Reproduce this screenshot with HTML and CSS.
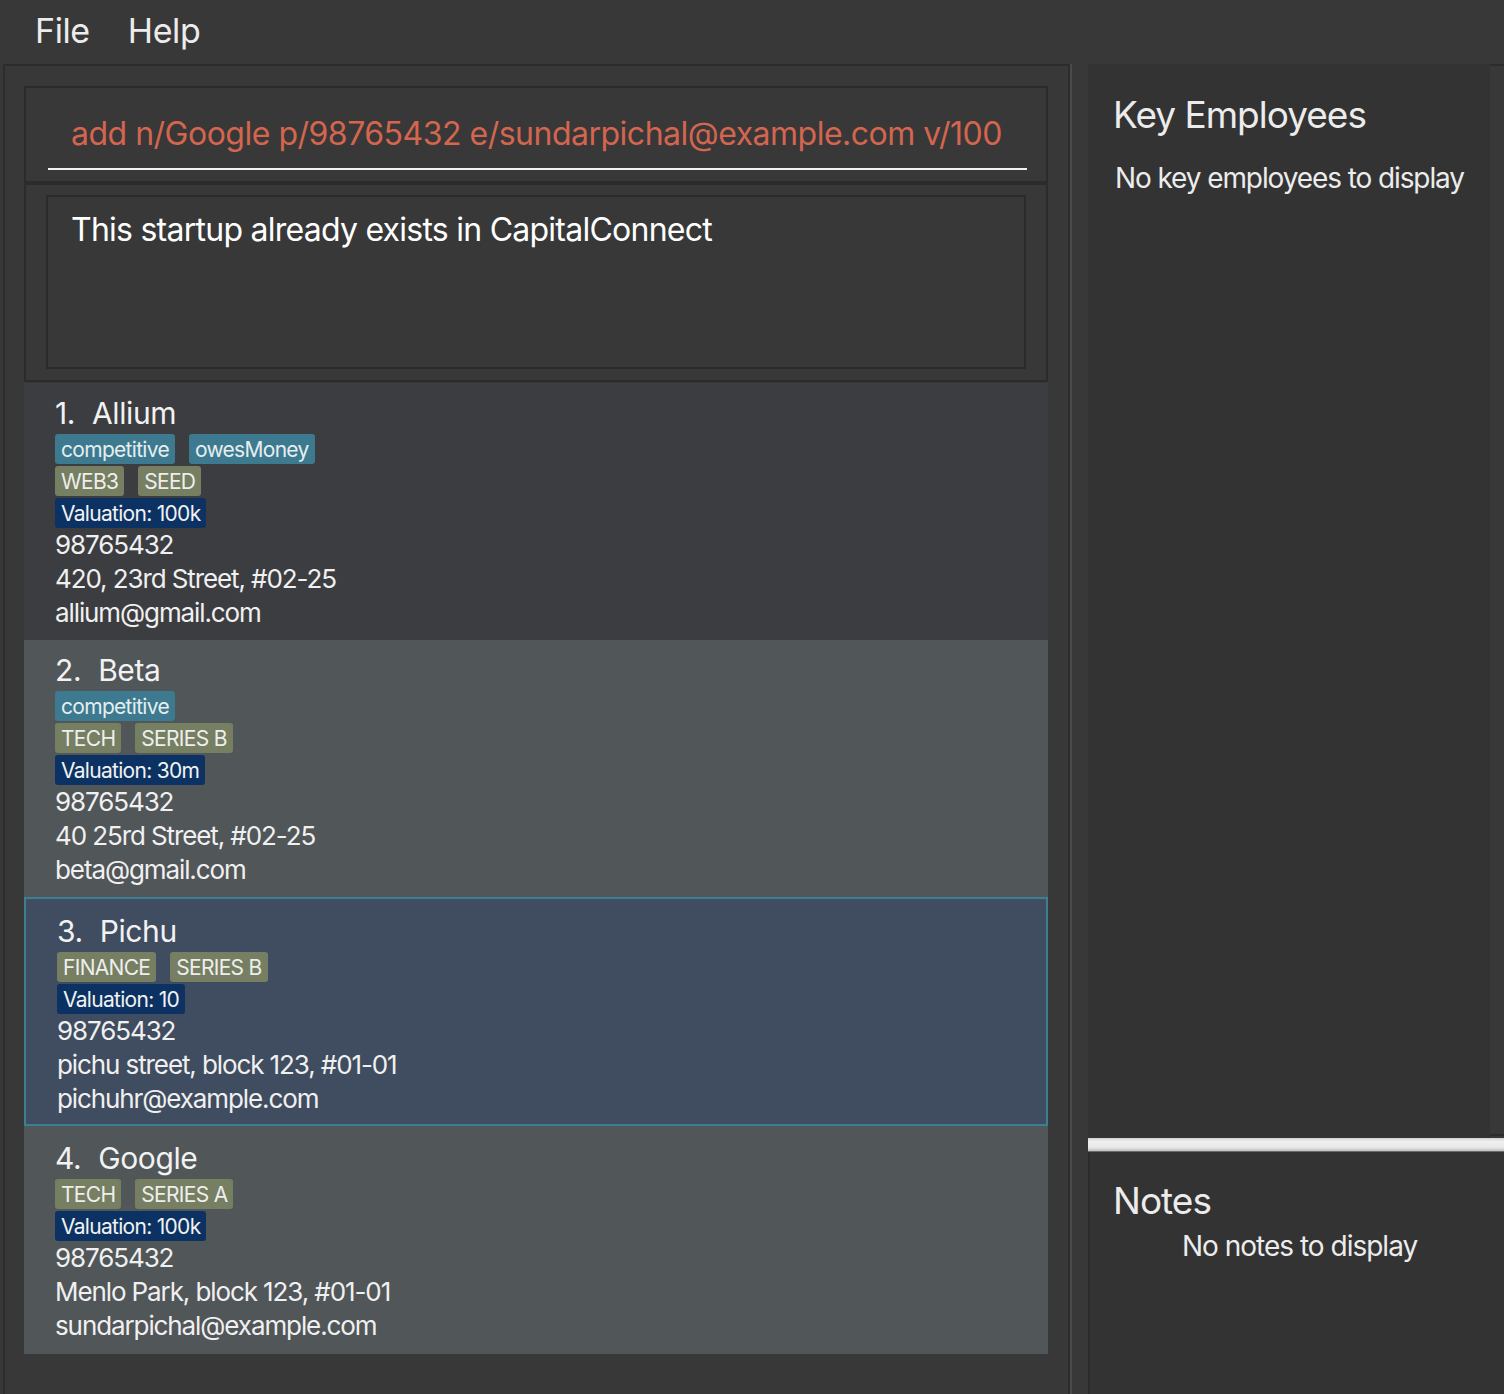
FILE: index.html
```html
<!DOCTYPE html>
<html>
<head>
<meta charset="utf-8">
<link rel="stylesheet" href="styles.css">
</head>
<body>
<div class="app">
  <div class="menubar">
    <span class="menu-item">File</span>
    <span class="menu-item">Help</span>
  </div>
  <div class="main">
    <div class="left-pane">
      <div class="command-box">
        <div class="command-text">add n/Google p/98765432 e/sundarpichal@example.com v/100</div>
        <div class="command-underline"></div>
      </div>
      <div class="result-box">
        <div class="result-inner">This startup already exists in CapitalConnect</div>
      </div>
      <div class="list">
        <div class="card odd">
          <div class="name"><span class="idx">1.</span>Allium</div>
          <div class="tag-row"><span class="tag teal">competitive</span><span class="tag teal">owesMoney</span></div>
          <div class="tag-row"><span class="tag olive">WEB3</span><span class="tag olive">SEED</span></div>
          <div class="tag-row"><span class="tag navy">Valuation: 100k</span></div>
          <div class="line">98765432</div>
          <div class="line">420, 23rd Street, #02-25</div>
          <div class="line">allium@gmail.com</div>
        </div>
        <div class="card even">
          <div class="name"><span class="idx">2.</span>Beta</div>
          <div class="tag-row"><span class="tag teal">competitive</span></div>
          <div class="tag-row"><span class="tag olive">TECH</span><span class="tag olive">SERIES B</span></div>
          <div class="tag-row"><span class="tag navy">Valuation: 30m</span></div>
          <div class="line">98765432</div>
          <div class="line">40 25rd Street, #02-25</div>
          <div class="line">beta@gmail.com</div>
        </div>
        <div class="card selected">
          <div class="name"><span class="idx">3.</span>Pichu</div>
          <div class="tag-row"><span class="tag olive">FINANCE</span><span class="tag olive">SERIES B</span></div>
          <div class="tag-row"><span class="tag navy">Valuation: 10</span></div>
          <div class="line">98765432</div>
          <div class="line">pichu street, block 123, #01-01</div>
          <div class="line">pichuhr@example.com</div>
        </div>
        <div class="card even last">
          <div class="name"><span class="idx">4.</span>Google</div>
          <div class="tag-row"><span class="tag olive">TECH</span><span class="tag olive">SERIES A</span></div>
          <div class="tag-row"><span class="tag navy">Valuation: 100k</span></div>
          <div class="line">98765432</div>
          <div class="line">Menlo Park, block 123, #01-01</div>
          <div class="line">sundarpichal@example.com</div>
        </div>
      </div>
    </div>
    <div class="v-divider"></div>
    <div class="right-col">
      <div class="right-top">
        <div class="panel employees">
          <div class="panel-title">Key Employees</div>
          <div class="panel-empty">No key employees to display</div>
        </div>
        <div class="strip"></div>
      </div>
      <div class="h-divider"></div>
      <div class="panel notes">
        <div class="panel-title">Notes</div>
        <div class="panel-empty centered">No notes to display</div>
      </div>
    </div>
  </div>
</div>
</body>
</html>
```

FILE: styles.css
```css
html, body {
  margin: 0;
  padding: 0;
  background: #383838;
}
body {
  font-family: "Inter", "Liberation Sans", sans-serif;
  color: #f0f0f0;
}
.app {
  width: 1504px;
  height: 1394px;
  display: flex;
  flex-direction: column;
  overflow: hidden;
  background: #383838;
}
.menubar {
  height: 64px;
  display: flex;
  align-items: center;
  padding-left: 35px;
  padding-bottom: 4px;
  gap: 38px;
  box-sizing: border-box;
}
.menu-item {
  font-size: 34px;
  color: #ececec;
  letter-spacing: -0.4px;
}
.main {
  flex: 1;
  display: flex;
  min-height: 0;
}
.left-pane {
  margin-left: 3px;
  width: 1067px;
  box-sizing: border-box;
  border: 2px solid #2c2c2c;
  border-bottom: none;
  padding: 20px 20px 0 19px;
  display: flex;
  flex-direction: column;
}
.command-box {
  height: 97px;
  box-sizing: border-box;
  border: 2px solid #2b2b2b;
  padding: 0 19px 0 22px;
  display: flex;
  flex-direction: column;
}
.command-text {
  color: #d4654f;
  font-size: 32px;
  letter-spacing: -0.5px;
  padding-left: 23px;
  margin-top: 26px;
  line-height: 40px;
  white-space: nowrap;
}
.command-underline {
  margin-top: 14px;
  height: 2px;
  background: #f2f2f2;
}
.result-box {
  height: 199px;
  box-sizing: border-box;
  border: 2px solid #2b2b2b;
  padding: 10px 20px 11px 20px;
  display: flex;
}
.result-inner {
  flex: 1;
  border: 2px solid #2b2b2b;
  color: #ffffff;
  font-size: 32px;
  letter-spacing: -0.75px;
  line-height: 40px;
  padding: 13px 0 0 23px;
}
.list {
  margin-top: 1px;
  display: flex;
  flex-direction: column;
  width: 1024px;
}
.card {
  padding: 11px 0 10px 31px;
  box-sizing: border-box;
}
.card.odd { background: #3c3d40; }
.card.even { background: #515659; }
.card.selected {
  background: #404c5f;
  border: 2px solid #3a7f94;
  padding: 13px 0 8px 31px;
}
.card.last {
  padding-top: 13px;
  padding-bottom: 11px;
}
.name {
  font-size: 30px;
  line-height: 38px;
  height: 38px;
  color: #f2f2f2;
  letter-spacing: -0.4px;
}
.idx {
  margin-right: 17px;
}
.tag-row {
  display: flex;
  gap: 14px;
  margin-top: 2px;
  height: 30px;
}
.tag {
  display: inline-flex;
  align-items: center;
  height: 30px;
  padding: 0 6px;
  border-radius: 3px;
  font-size: 21px;
  letter-spacing: -0.7px;
  color: #eeeeee;
  box-sizing: border-box;
}
.tag.teal { background: #3d7a8f; color: #e6eef0; }
.tag.olive { background: #767f62; color: #eeeeee; }
.tag.navy { background: #0b3263; color: #f2f2f2; }
.line {
  font-size: 26px;
  line-height: 34px;
  letter-spacing: -1.1px;
  color: #f0f0f0;
}
.v-divider {
  width: 2px;
  background: #4b4b4b;
}
.right-col {
  margin-left: 16px;
  flex: 1;
  display: flex;
  flex-direction: column;
}
.right-top {
  height: 1074px;
  display: flex;
}
.panel {
  background: #333333;
  box-sizing: border-box;
}
.panel.employees {
  flex: 1;
  padding: 28px 0 0 25px;
}
.strip {
  width: 14px;
  border-top: 2px solid #2c2c2c;
  border-bottom: 2px solid #2c2c2c;
  box-sizing: border-box;
  margin-bottom: 2px;
}
.h-divider {
  height: 14px;
  background: linear-gradient(#d2d2d2 0%, #efefef 25%, #eaeaea 65%, #c4c4c4 90%, #3a3a3a 100%);
}
.panel.notes {
  flex: 1;
  border-left: 2px solid #2c2c2c;
  padding: 26px 0 0 23px;
}
.panel-title {
  font-size: 37px;
  line-height: 46px;
  color: #ececec;
  letter-spacing: -1px;
}
.panel-empty {
  font-size: 28px;
  line-height: 36px;
  color: #ececec;
  letter-spacing: -1.1px;
  margin-top: 22px;
  padding-left: 2px;
}
.panel-empty.centered {
  margin-top: 4px;
  padding-left: 69px;
  letter-spacing: -1px;
}
```
